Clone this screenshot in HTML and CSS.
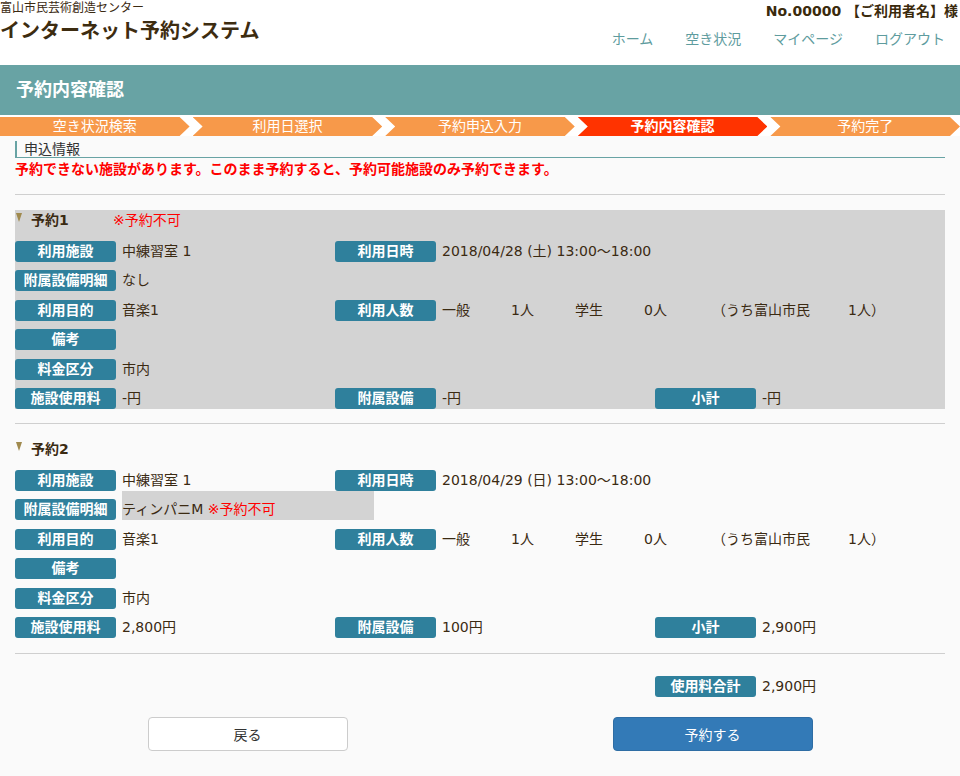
FILE: index.html
```html
<!DOCTYPE html>
<html lang="ja">
<head>
<meta charset="utf-8">
<title>予約内容確認</title>
<link rel="stylesheet" href="styles.css">
</head>
<body>
<header class="site-header">
  <div class="brand">
    <div class="org">富山市民芸術創造センター</div>
    <div class="title">インターネット予約システム</div>
  </div>
  <div class="account">
    <div class="user">No.00000 【ご利用者名】様</div>
    <nav class="nav">
      <a href="#">ホーム</a>
      <a href="#">空き状況</a>
      <a href="#">マイページ</a>
      <a href="#">ログアウト</a>
    </nav>
  </div>
</header>

<div class="page-title">予約内容確認</div>

<ol class="steps">
  <li class="step first">空き状況検索</li>
  <li class="step">利用日選択</li>
  <li class="step">予約申込入力</li>
  <li class="step active">予約内容確認</li>
  <li class="step">予約完了</li>
</ol>

<main class="content">
  <h2 class="section">申込情報</h2>
  <p class="warning">予約できない施設があります。このまま予約すると、予約可能施設のみ予約できます。</p>
  <hr class="rule rule-first">

  <section class="booking booking-ng">
    <div class="booking-head"><span class="mark"></span><span class="booking-name">予約1</span><span class="ng-text">※予約不可</span></div>
    <div class="rows">
      <div class="row">
        <div class="cell"><span class="label">利用施設</span><span class="value">中練習室 1</span></div>
        <div class="cell"><span class="label">利用日時</span><span class="value">2018/04/28 (土) 13:00～18:00</span></div>
      </div>
      <div class="row">
        <div class="cell"><span class="label">附属設備明細</span><span class="value">なし</span></div>
      </div>
      <div class="row">
        <div class="cell"><span class="label">利用目的</span><span class="value">音楽1</span></div>
        <div class="cell cell-wide"><span class="label">利用人数</span><span class="value"><span class="n n1">一般</span><span class="n n2">1人</span><span class="n n3">学生</span><span class="n n4">0人</span><span class="n n5">（うち富山市民</span><span class="n">1人）</span></span></div>
      </div>
      <div class="row">
        <div class="cell"><span class="label">備考</span><span class="value"></span></div>
      </div>
      <div class="row">
        <div class="cell"><span class="label">料金区分</span><span class="value">市内</span></div>
      </div>
      <div class="row">
        <div class="cell"><span class="label">施設使用料</span><span class="value">-円</span></div>
        <div class="cell"><span class="label">附属設備</span><span class="value">-円</span></div>
        <div class="cell"><span class="label">小計</span><span class="value">-円</span></div>
      </div>
    </div>
  </section>

  <hr class="rule rule-mid">

  <section class="booking">
    <div class="booking-head"><span class="mark"></span><span class="booking-name">予約2</span></div>
    <div class="rows">
      <div class="row">
        <div class="cell"><span class="label">利用施設</span><span class="value">中練習室 1</span></div>
        <div class="cell"><span class="label">利用日時</span><span class="value">2018/04/29 (日) 13:00～18:00</span></div>
      </div>
      <div class="row">
        <div class="cell"><span class="label">附属設備明細</span><span class="value value-ng">ティンパニM <span class="ng-text">※予約不可</span></span></div>
      </div>
      <div class="row">
        <div class="cell"><span class="label">利用目的</span><span class="value">音楽1</span></div>
        <div class="cell cell-wide"><span class="label">利用人数</span><span class="value"><span class="n n1">一般</span><span class="n n2">1人</span><span class="n n3">学生</span><span class="n n4">0人</span><span class="n n5">（うち富山市民</span><span class="n">1人）</span></span></div>
      </div>
      <div class="row">
        <div class="cell"><span class="label">備考</span><span class="value"></span></div>
      </div>
      <div class="row">
        <div class="cell"><span class="label">料金区分</span><span class="value">市内</span></div>
      </div>
      <div class="row">
        <div class="cell"><span class="label">施設使用料</span><span class="value">2,800円</span></div>
        <div class="cell"><span class="label">附属設備</span><span class="value">100円</span></div>
        <div class="cell"><span class="label">小計</span><span class="value">2,900円</span></div>
      </div>
    </div>
  </section>

  <hr class="rule rule-last">

  <div class="row total">
    <div class="cell cell-total"><span class="label">使用料合計</span><span class="value">2,900円</span></div>
  </div>

  <div class="actions">
    <button class="btn btn-back" type="button">戻る</button>
    <button class="btn btn-primary" type="button">予約する</button>
  </div>
</main>
</body>
</html>
```

FILE: styles.css
```css
* {
  box-sizing: border-box;
}

html, body {
  margin: 0;
  padding: 0;
}

body {
  font-family: "DejaVu Sans", "Noto Sans CJK JP", sans-serif;
  color: #3b2a12;
  background: #fafafa;
  font-size: 14px;
}

/* header */
.site-header {
  display: flex;
  justify-content: space-between;
  height: 65px;
  background: #fff;
}

.org {
  font-size: 12px;
  line-height: 16px;
  color: #3b2a12;
}

.title {
  margin-top: 3px;
  font-size: 20px;
  line-height: 24px;
  font-weight: bold;
  color: #3d2c10;
}

.account {
  display: flex;
  flex-direction: column;
  align-items: flex-end;
  padding-right: 2px;
}

.user {
  padding-top: 1px;
  font-size: 14px;
  line-height: 20px;
  font-weight: bold;
  color: #3a2a0c;
}

.nav {
  display: flex;
  gap: 32px;
  margin-top: 8px;
  padding-right: 13px;
}

.nav a {
  font-size: 14px;
  line-height: 20px;
  color: #5e9c9e;
  text-decoration: none;
}

/* page title */
.page-title {
  display: flex;
  align-items: center;
  height: 50px;
  padding: 0 0 4px 16px;
  background: #68a3a4;
  color: #fff;
  font-size: 18px;
  font-weight: bold;
}

/* steps */
.steps {
  display: flex;
  gap: 3px;
  margin: 0;
  padding: 2px 0 0;
  list-style: none;
  background: #fff;
}

.step {
  flex: 1 1 0;
  height: 19px;
  line-height: 19px;
  text-align: center;
  font-size: 14px;
  color: #fff;
  background: #f7994a;
  clip-path: polygon(0 0, calc(100% - 10px) 0, 100% 50%, calc(100% - 10px) 100%, 0 100%, 10px 50%);
}

.step.first {
  clip-path: polygon(0 0, calc(100% - 10px) 0, 100% 50%, calc(100% - 10px) 100%, 0 100%);
}

.step.active {
  background: #ff3300;
  font-weight: bold;
}

/* content */
.content {
  padding: 0 15px 24px;
  background: #fafafa;
}

.section {
  margin: 5px 0 0;
  padding-left: 7px;
  height: 17px;
  line-height: 16px;
  font-size: 14px;
  font-weight: normal;
  color: #333;
  border-left: 2px solid #68a3a4;
  border-bottom: 1px solid #68a3a4;
}

.warning {
  margin: 1px 0 0;
  line-height: 20px;
  font-size: 14px;
  font-weight: bold;
  color: #ff0000;
}

.rule {
  margin: 0;
  border: 0;
  height: 1px;
  background: #cfcfcf;
}

.rule-first {
  margin-top: 15px;
}

.rule-mid {
  margin-top: 14px;
}

.rule-last {
  margin-top: 15px;
}

.booking {
  margin-top: 15px;
}

.booking-ng {
  background: #d3d3d3;
}

.booking-head {
  display: flex;
  align-items: flex-start;
  height: 21px;
  line-height: 21px;
  margin-bottom: 10px;
}

.mark {
  width: 0;
  height: 0;
  margin: 3px 0 0 1px;
  border-left: 3px solid transparent;
  border-right: 3px solid transparent;
  border-top: 9px solid #a08a4e;
}

.booking-name {
  width: 82px;
  margin-left: 9px;
  font-weight: bold;
  color: #3b2a12;
}

.ng-text {
  color: #ff0000;
}

.rows {
  display: flex;
  flex-direction: column;
  gap: 8.4px;
}

.row {
  display: grid;
  grid-template-columns: 320px 320px 1fr;
  height: 21px;
}

.cell {
  display: flex;
  align-items: flex-start;
  min-width: 0;
}

.cell-wide {
  grid-column: 2 / 4;
}

.label {
  flex-shrink: 0;
  width: 101px;
  height: 21px;
  line-height: 21px;
  text-align: center;
  font-size: 14px;
  font-weight: bold;
  color: #fff;
  background: #2f809c;
  border-radius: 3px;
}

.value {
  flex-shrink: 0;
  margin-left: 6px;
  line-height: 21px;
  font-size: 14px;
  white-space: nowrap;
  color: #3b2a12;
}

.value-ng {
  width: 252px;
  margin-top: -8.4px;
  padding-top: 8.4px;
  height: 29.4px;
  background: #d3d3d3;
}

.n {
  display: inline-block;
}

.n1 { width: 69px; }
.n2 { width: 64px; }
.n3 { width: 69px; }
.n4 { width: 68px; }
.n5 { width: 136px; }

.total {
  margin-top: 22px;
}

.cell-total {
  grid-column: 3;
}

.actions {
  display: grid;
  grid-template-columns: 1fr 1fr;
  justify-items: center;
  margin-top: 20px;
}

.btn {
  width: 200px;
  height: 34px;
  border-radius: 4px;
  font-family: "DejaVu Sans", "Noto Sans CJK JP", sans-serif;
  font-size: 14px;
  cursor: pointer;
}

.btn-back {
  background: #fff;
  border: 1px solid #ccc;
  color: #333;
}

.btn-primary {
  background: #337ab7;
  border: 1px solid #2e6da4;
  color: #fff;
}
```
